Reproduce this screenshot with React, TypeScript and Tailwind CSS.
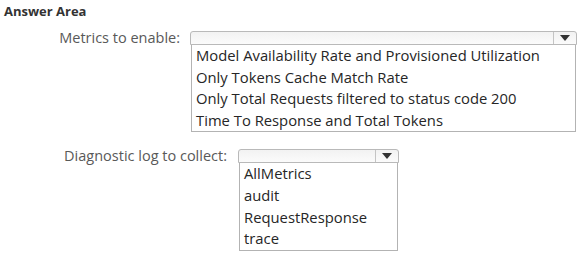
const metrics = [
  "Model Availability Rate and Provisioned Utilization",
  "Only Tokens Cache Match Rate",
  "Only Total Requests filtered to status code 200",
  "Time To Response and Total Tokens",
];

const logs = ["AllMetrics", "audit", "RequestResponse", "trace"];

function Caret() {
  return (
    <svg width="10" height="6" viewBox="0 0 10 6">
      <path d="M0 0 L10 0 L5 6 Z" fill="#333" />
    </svg>
  );
}

function DropList({ items, width }: { items: string[]; width: string }) {
  return (
    <div className={`flex flex-col ${width}`}>
      <div className="flex h-[14px] rounded-t-[3px] border border-[#b9b9b9] bg-gradient-to-b from-[#f2f2f2] to-[#fbfbfb]">
        <div className="flex-1" />
        <div className="flex w-[23px] items-center justify-center border-l border-[#c4c4c4]">
          <Caret />
        </div>
      </div>
      <ul className="mx-[1px] border border-t-0 border-[#b3b3b3] bg-white pl-[4px]">
        {items.map((t) => (
          <li key={t} className="h-[21.6px] leading-[20.4px] text-[14.8px] text-[#262626]">
            {t}
          </li>
        ))}
      </ul>
    </div>
  );
}

export default function App() {
  return (
    <div
      className="h-[258px] w-[584px] bg-white"
      style={{ fontFamily: '"Open Sans", sans-serif' }}
    >
      <div className="pl-[4px] pt-[4px] text-[13px] font-bold leading-[14px] text-[#333]">
        Answer Area
      </div>
      <div className="mt-[13px] flex">
        <div className="w-[180px] text-right text-[14.5px] leading-[14px] text-[#595959]">
          Metrics to enable:
        </div>
        <div className="ml-[10px]">
          <DropList items={metrics} width="w-[387px]" />
        </div>
      </div>
      <div className="mt-[17px] flex">
        <div className="w-[227px] text-right text-[14.5px] leading-[14px] text-[#595959]">
          Diagnostic log to collect:
        </div>
        <div className="ml-[11px]">
          <DropList items={logs} width="w-[161px]" />
        </div>
      </div>
    </div>
  );
}
